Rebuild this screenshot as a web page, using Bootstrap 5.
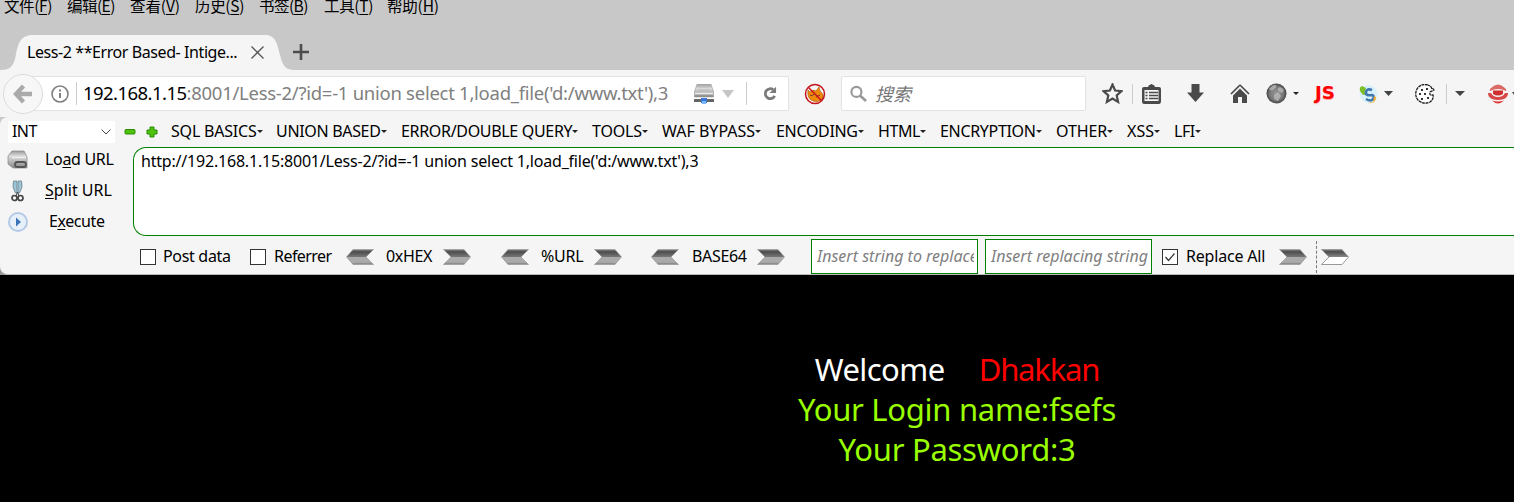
<!DOCTYPE html>
<html lang="zh-CN">
<head>
<meta charset="utf-8">
<title>Less-2 **Error Based- Intiger**</title>
<link href="https://cdn.jsdelivr.net/npm/bootstrap@5.3.0/dist/css/bootstrap.min.css" rel="stylesheet">
<style>
body{font:16px/22px "Noto Sans","Noto Sans CJK SC",sans-serif;color:#000;background:#000;width:1514px;height:502px}
svg{display:block;flex:none}
.defs{position:absolute;width:0;height:0}
.txt{white-space:pre;display:inline-block;justify-self:start}
.row1 .txt,.row3>.txt,.side .txt{line-height:20px;padding-bottom:2px}
/* letter-spacing steps */
.s0{letter-spacing:-.12px}.s1{letter-spacing:-.2px}.s2{letter-spacing:-.32px}.s3{letter-spacing:-.42px}.s4{letter-spacing:-.55px}
.titlebar{height:70px;background:#c8c8c8}
.menubar{height:17px;display:grid;grid-template-columns:63px 63px 65px 64px 65px 63px 60px;padding-left:4px;line-height:24px;margin-top:-7px;font-family:"Noto Sans CJK SC",sans-serif;font-size:15.5px}
.menubar u,.side u{text-underline-offset:2px;text-decoration-thickness:1px}
.tabstrip{height:35px;margin-top:25px}
.tab-body{width:295px;height:35px;background:#f5f5f5;clip-path:path("M0 35C10 35 13 32 15.500 22C18 8 20 0 34 0H264C276 0 277 8 280 20C283 32 286 35 295 35Z")}
.tab-title{margin-left:27px;width:223px;line-height:20px;padding-bottom:2px}
.plus{margin:9px 0 0 -2px}
.navrow{height:47px;background:#f5f5f5;display:grid;grid-template-columns:43px 746px 52px 245px 428px}
.back-btn{width:40px;height:40px;border:1px solid #dcdcdc;border-radius:50%;background:#f7f7f7;margin-left:3px;z-index:2}
.urlbox,.searchbox{height:35px;background:#fff;border:1px solid #e2e2e2;border-radius:2px}
.urlbox{margin-left:-12px;border-left:0;padding-left:20px}
.url{font-size:18.500px;line-height:24px;padding-bottom:2px;color:#808080;width:611px}
.url-path{letter-spacing:-.27px}
.vline{width:1px;height:23px;background:#ccc;flex:none}
.tools .vline{height:20px}
.tools{grid-template-columns:16px 30px 10px 44px 44px 36px 27px 22px 44px 25px 31px 31px 9px 33px 24px 4px;overflow:hidden}
.js{color:#f00;font:bold 17px/20px "DejaVu Sans",sans-serif;text-shadow:0 1px 1px #faa;padding-bottom:2px;transform:scaleX(1.08);transform-origin:0 0}
.search-hint{font-size:18px;color:#777;line-height:24px}
.hack-wrap{background:linear-gradient(#c8c8c8 50%,#999 50%)}
.hackbar{height:158px;background:#f5f5f5;border-bottom:1px solid #bbb;border-radius:8px 0 0 8px}
.row1{height:30px;display:grid;grid-template-columns:117px 22px 25px 105px 125px 191px 70px 114px 102px 62px 116px 71px 47px 40px;padding-left:7px;align-items:center}
.typesel{width:107px;height:22px;background:#fff;padding:0 4px;margin-left:1px}
.car{display:inline-block;border:3px solid transparent;border-top-color:#222;border-bottom:0;width:5px}
.row1 .car{margin-top:-1px}
.side{width:133px;height:89px;display:grid;grid-template-columns:38px 1fr;grid-template-rows:31px 31px 31px;padding-left:7px;align-items:center;margin-top:-3px}
.exec{margin-left:4px}
.urlarea{flex:1;height:89px;background:#fff;border:1px solid #008000;border-right:0;border-radius:13px 0 0 13px;padding:2px 7px}
.row3{height:38px;display:grid;padding:3px 0 0 140px;align-items:center;grid-template-columns:23px 87px 24px 72px 40px 57px 58px 40px 53px 57px 41px 65px 54px 174px 177px 24px 93px 37px 5px 40px}
.row3>svg,.ck{margin-top:1px}
.ck{width:16px;height:16px;border:1px solid #333;background:#fff}
.dash{height:32px;border-left:1px dashed #777}
.rep{width:167px;height:35px;border:1px solid #008000;background:#fff;color:#808080;font-style:italic;padding:5px 3px 0 5px}
.rep div{overflow:hidden}
.web{height:227px;padding:74px 0 0 400px;text-align:center;font-size:31px;line-height:40px;color:#99ff00}
.welcome{letter-spacing:-.55px}
.dhak{color:#f00;margin-left:34px;letter-spacing:-1.18px}
.login{letter-spacing:-.28px}
</style>
</head>
<body>
<svg class="defs">
<defs>
<linearGradient id="ag" x2="0" y2="1"><stop offset="0" stop-color="#888"/><stop offset=".15" stop-color="#4c4c4c"/><stop offset=".5" stop-color="#777"/><stop offset=".52" stop-color="#aaa"/><stop offset=".85" stop-color="#aaa"/><stop offset="1" stop-color="#777"/></linearGradient>
<linearGradient id="aw" x2="0" y2="1"><stop offset="0" stop-color="#888"/><stop offset=".15" stop-color="#4c4c4c"/><stop offset=".5" stop-color="#888"/><stop offset=".53" stop-color="#fff"/></linearGradient>
<radialGradient id="gl"><stop offset="0" stop-color="#999"/><stop offset=".7" stop-color="#777"/><stop offset="1" stop-color="#444"/></radialGradient>
<linearGradient id="mg" x2="0" y2="1"><stop offset="0" stop-color="#999"/><stop offset=".3" stop-color="#ddd"/><stop offset="1" stop-color="#888"/></linearGradient>
<symbol id="r" viewBox="0 0 28 16"><path d="M.5.5H21L27.500 8 21 15.500H.5L8 8Z" fill="url(#ag)" stroke="#999" stroke-width=".7"/></symbol>
<symbol id="l" viewBox="0 0 28 16"><path d="M27.500.5H7L.5 8 7 15.500H27.500L20 8Z" fill="url(#ag)" stroke="#999" stroke-width=".7"/></symbol>
</defs></svg>

<div class="titlebar overflow-hidden">
<nav class="menubar">
<span class="txt s3">文件(<u>F</u>)</span><span class="txt s4">编辑(<u>E</u>)</span><span class="txt s0">查看(<u>V</u>)</span><span class="txt s2">历史(<u>S</u>)</span><span class="txt s4">书签(<u>B</u>)</span><span class="txt s2">工具(<u>T</u>)</span><span class="txt s1">帮助(<u>H</u>)</span>
</nav>
<div class="tabstrip d-flex">
<div class="tab-body d-flex align-items-center"><span class="txt tab-title s3">Less-2 **Error Based- Intige...</span><svg width="15" height="15" viewBox="0 0 15 15"><path d="M1.500 1.500l12 12m0-12l-12 12" stroke="#555" stroke-width="1.300"/></svg></div>
<svg class="plus" width="16" height="16" viewBox="0 0 16 16"><path d="M8 0v16M0 8h16" stroke="#4d4d4d" stroke-width="2.600"/></svg>
</div>
</div>

<div class="navrow align-items-center">
<div class="back-btn d-flex align-items-center justify-content-center"><svg width="20" height="20" viewBox="0 0 20 20"><path d="M10.500 2L3 10l7.500 8M4 10h15" fill="none" stroke="#aaa" stroke-width="4.300"/></svg></div>
<div class="urlbox d-flex align-items-center">
<svg width="18" height="18" viewBox="0 0 18 18"><circle cx="9" cy="9" r="8" fill="none" stroke="#808080" stroke-width="1.600"/><path d="M9 8v5M9 4.500v2" stroke="#808080" stroke-width="2"/></svg>
<i class="vline ms-2 me-2" style="margin:0 6px 0 7px!important"></i>
<span class="txt url"><span class="text-black s4">192.168.1.15</span><span class="url-path">:8001/Less-2/?id=-1 union select 1,load_file('d:/www.txt'),3</span></span>
<svg width="20" height="20" viewBox="0 0 20 20"><path d="M3 .3h14l2.700 8V13H.3V8.300z" fill="url(#mg)" stroke="#999" stroke-width=".6"/><path d="M4.500 3h11M4 6h12" stroke="#bbb"/><path d="M1 9.500h18" stroke="#eee" stroke-width="1.600"/><path d="M0 15h20v3H0z" fill="#666"/><path d="M7 14h6v5H7z" fill="#3c78d8"/><path d="M8 17h4v3H8z" fill="#79b4ff"/></svg>
<svg class="mx-2" width="12" height="8" viewBox="0 0 12 8"><path d="M0 0h12L6 8z" fill="#c6c6c6"/></svg>
<i class="vline ms-1"></i>
<svg class="ms-3" width="14" height="15" viewBox="0 0 15 15"><path d="M11 3.500A5.300 5.300 0 1 0 12.500 10" fill="none" stroke="#7b7b7b" stroke-width="3"/><path d="M14 .3V7H7z" fill="#7b7b7b"/></svg>
</div>
<svg class="mx-auto" width="22" height="22" viewBox="0 0 22 22"><path d="M4 7l2 2q3-3 6-1l3-4 1 4q4 3 3 7-5 6-12 2-4-3-3-10z" fill="#ef8a0c" stroke="#a65300" stroke-width=".6"/><path d="M6 12q3 2 4-1M12 14l4-2" stroke="#733" fill="none"/><circle cx="11" cy="11" r="9.500" fill="none" stroke="#c5131b" stroke-width="1.500"/><path d="M4.500 4.500l13 13" stroke="#c5131b" stroke-width="1.500"/></svg>
<div class="searchbox d-flex align-items-center"><svg class="ms-2 me-2" width="17" height="18" viewBox="0 0 18 18"><circle cx="6.800" cy="6.800" r="5.300" fill="none" stroke="#999" stroke-width="2.300"/><path d="M10.500 10.500L17 16.500" stroke="#999" stroke-width="2.800"/></svg><span class="search-hint fst-italic">搜索</span></div>
<div class="tools d-grid align-items-center">
<i></i>
<svg width="21" height="21" viewBox="0 0 21 21"><path d="M10.500 1.500l2.600 6 6.400.6-4.800 4.300 1.400 6.500-5.600-3.400-5.600 3.400 1.400-6.500L1.500 8.100l6.400-.6z" fill="none" stroke="#4a4a4a" stroke-width="2.200"/></svg>
<i class="vline"></i>
<svg width="19" height="20" viewBox="0 0 19 20"><path d="M0 5q0-2 2-2h4l1-2h1q1.500-2 3 0h1l1 2h4q2 0 2 2v12q0 3-2 3H2q-2 0-2-3z" fill="#4a4a4a"/><path d="M2.500 6h14v11h-14z" fill="#f5f5f5"/><path d="M3.500 8.500h2m1.500 0h9m-12.500 3h2m1.500 0h9m-12.500 3h2m1.500 0h9" stroke="#4a4a4a" stroke-width="1.600"/></svg>
<svg width="19" height="19" viewBox="0 0 19 19"><path d="M5.500 0h8v8.500H18L9.500 18 1 8.500h4.500z" fill="#4a4a4a"/></svg>
<svg width="20" height="20" viewBox="0 0 20 20"><path d="M10 1L1 10M10 1l9 9" stroke="#4a4a4a" stroke-width="1.700"/><path d="M3 11.500L10 4.500l7 7V19h-5v-6H8v6H3z" fill="#4a4a4a"/></svg>
<svg width="21" height="21" viewBox="0 0 21 21"><circle cx="10.500" cy="10.500" r="10" fill="url(#gl)"/><path d="M3 6q4-5 7-4 1 3-2 4-2 3-5 0zm9-1q3-2 6 2l-2 3-4-2zM8 12l4-3 3 4-3 5-4-2z" fill="#bbb" opacity=".75"/></svg>
<i class="car"></i>
<span class="txt js">JS</span>
<svg width="19" height="20" viewBox="0 0 19 20"><circle cx="9.500" cy="10" r="9" fill="#d8f1fb"/><path d="M1 7q-1-4 2-5l4 2-1 4 2 2-4 1z" fill="#7cbf2b"/><path d="M13 6Q8 4 7 8t6 3q3 1 1 4t-7 0" fill="none" stroke="#3f78b0" stroke-width="2.600"/><path d="M9 19l5-1 1-6 2 1q0 7-8 6z" fill="#e9ac35"/></svg>
<svg width="9" height="5" viewBox="0 0 9 5"><path d="M0 0h9L4.500 5z" fill="#444"/></svg>
<svg width="20" height="20" viewBox="0 0 20 20"><path d="M13 1Q6-1 2 5-1 11 3 16q5 5 12 2 4-3 3-7-4 1-3-3l4-2q-1-2-2-1-1-3-4-4z" fill="#fff" stroke="#222" stroke-width="1.300" stroke-dasharray="3 .6"/><path d="M6 5h2v2H6zm5-1h2v2h-2zM4 9h2v2H4zm5 0h2v2H9zm-3 5h2v2H6zm6-1h2v2h-2z" fill="#333"/></svg>
<i class="vline"></i>
<svg width="10" height="5" viewBox="0 0 10 5"><path d="M0 0h10L5 5z" fill="#444"/></svg>
<svg width="20" height="20" viewBox="0 0 20 20"><path d="M3 4Q10-3 17 4 19 6 18 7 10 3 2 7 1 6 3 4z" fill="#dc6a66"/><path d="M5 6.500h10V10q-5 3-10 0z" fill="#cf2f2f"/><path d="M0 9h3q2 4 7 4t7-4h3q0 4-4 6-6 2-12 0-4-2-4-6z" fill="#d94848"/><path d="M4 16.500q6 2 12 0-6 6-12 0z" fill="#d33"/></svg>
<svg width="2" height="3"><path d="M0 0h2v3z" fill="#444"/></svg>
</div>
</div>

<div class="hack-wrap"><div class="hackbar">
<div class="row1">
<div class="typesel d-flex align-items-center justify-content-between"><span class="txt s4">INT</span><svg width="10" height="6" viewBox="0 0 10 6"><path d="M.5.5L5 5 9.500.5" fill="none" stroke="#444"/></svg></div>
<svg width="12" height="12" viewBox="0 0 12 12"><rect x="1" y="3.500" width="10" height="4.500" rx="1" fill="#4fc30d" stroke="#2c8a05"/></svg>
<svg width="12" height="12" viewBox="0 0 12 12"><path d="M4 1h4v3h3v4H8v3H4V8H1V4h3z" fill="#4fc30d" stroke="#2c8a05" stroke-linejoin="round"/></svg>
<span class="d-flex align-items-center"><span class="txt s1">SQL BASICS</span><i class="car"></i></span>
<span class="d-flex align-items-center"><span class="txt s2">UNION BASED</span><i class="car"></i></span>
<span class="d-flex align-items-center"><span class="txt s2">ERROR/DOUBLE QUERY</span><i class="car"></i></span>
<span class="d-flex align-items-center"><span class="txt s1">TOOLS</span><i class="car"></i></span>
<span class="d-flex align-items-center"><span class="txt">WAF BYPASS</span><i class="car"></i></span>
<span class="d-flex align-items-center"><span class="txt s2">ENCODING</span><i class="car"></i></span>
<span class="d-flex align-items-center"><span class="txt s3">HTML</span><i class="car"></i></span>
<span class="d-flex align-items-center"><span class="txt s2">ENCRYPTION</span><i class="car"></i></span>
<span class="d-flex align-items-center"><span class="txt s0">OTHER</span><i class="car"></i></span>
<span class="d-flex align-items-center"><span class="txt">XSS</span><i class="car"></i></span>
<span class="d-flex align-items-center"><span class="txt s3">LFI</span><i class="car"></i></span>
</div>
<div class="d-flex">
<div class="side">
<svg width="22" height="20" viewBox="0 0 22 20"><path d="M5 1h12l3 6v11H6L1 14V6z" fill="url(#mg)" stroke="#888" stroke-width=".7"/><path d="M5 7.500h14" stroke="#eee" stroke-width="1.500"/><rect x="8" y="12" width="11" height="5" rx="2.500" fill="none" stroke="#555" stroke-width="1.800"/></svg><span class="txt s2">Lo<u>a</u>d URL</span>
<svg width="22" height="22" viewBox="0 0 22 22"><path d="M6.500 1q-2 6 2 12h1.500V1zM11 1v12h1.500q4-6 2-12z" fill="#9ec5d6" stroke="#68838f" stroke-width=".8"/><circle cx="7.500" cy="18" r="2.500" fill="none" stroke="#444" stroke-width="1.700"/><circle cx="13.500" cy="18" r="2.500" fill="none" stroke="#444" stroke-width="1.700"/><path d="M9 16l1.500-4 1.500 4" stroke="#444" fill="none"/></svg><span class="txt"><u>S</u>plit URL</span>
<svg width="22" height="22" viewBox="0 0 22 22"><circle cx="11" cy="11" r="9" fill="#e7eff8" stroke="#b3c9e6" stroke-width="2"/><path d="M9 6.500l5 4.500-5 4.500z" fill="#3c74b8"/></svg><span class="txt exec s3">E<u>x</u>ecute</span>
</div>
<div class="urlarea"><span class="txt s1">http://192.168.1.15:8001/Less-2/?id=-1 union select 1,load_file('d:/www.txt'),3</span></div>
</div>
<div class="row3">
<i class="ck"></i><span class="txt s2">Post data</span><i class="ck"></i><span class="txt s4">Referrer</span>
<svg width="28" height="16"><use href="#l"/></svg><span class="txt s2">0xHEX</span><svg width="28" height="16"><use href="#r"/></svg>
<svg width="28" height="16"><use href="#l"/></svg><span class="txt s1">%URL</span><svg width="28" height="16"><use href="#r"/></svg>
<svg width="28" height="16"><use href="#l"/></svg><span class="txt s2">BASE64</span><svg width="28" height="16"><use href="#r"/></svg>
<div class="rep"><div><span class="txt">Insert string to replace</span></div></div><div class="rep"><div><span class="txt">Insert replacing string</span></div></div>
<i class="ck"><svg width="14" height="14" viewBox="0 0 14 14"><path d="M2.500 7l3 3.500 6-7" fill="none" stroke="#333" stroke-width="1.200"/></svg></i><span class="txt s1">Replace All</span><svg width="28" height="16"><use href="#r"/></svg>
<i class="dash"></i><svg width="28" height="16" viewBox="0 0 28 16"><path d="M.5.5H21L27.500 8 21 15.500H.5L8 8Z" fill="url(#aw)" stroke="#999"/></svg>
</div>
</div></div>

<main class="web">
<div><span class="txt text-white welcome">Welcome</span><span class="txt dhak">Dhakkan</span></div>
<div><span class="txt login">Your Login name:fsefs</span></div>
<div><span class="txt login">Your Password:3</span></div>
</main>
<script src="https://cdn.jsdelivr.net/npm/bootstrap@5.3.0/dist/js/bootstrap.bundle.min.js"></script>
</body>
</html>
